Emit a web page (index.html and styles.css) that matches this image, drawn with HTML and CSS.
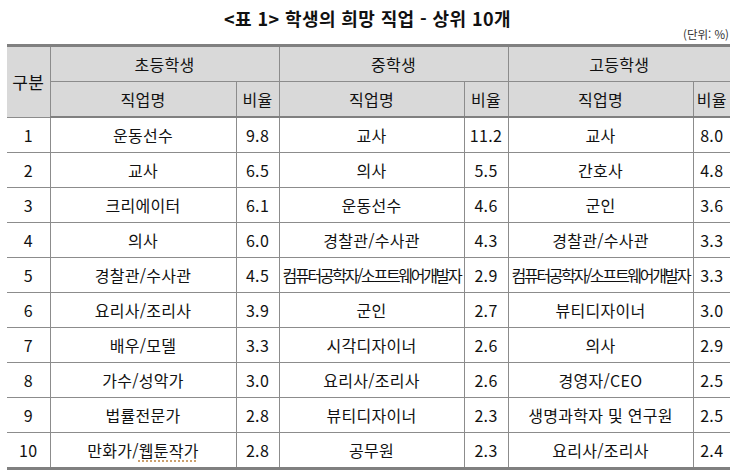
FILE: index.html
```html
<!DOCTYPE html>
<html lang="ko">
<head>
<meta charset="utf-8">
<link rel="stylesheet" href="styles.css">
</head>
<body>
<div class="page">
  <h1 class="title">&lt;표 1&gt; 학생의 희망 직업 - 상위 10개</h1>
  <div class="unit">(단위: %)</div>
  <table class="jobs">
    <colgroup>
      <col class="c-rank">
      <col class="c-name1"><col class="c-rate1">
      <col class="c-name2"><col class="c-rate2">
      <col class="c-name3"><col class="c-rate3">
    </colgroup>
    <thead>
      <tr class="h1">
        <th rowspan="2" class="gubun">구분</th>
        <th colspan="2">초등학생</th>
        <th colspan="2">중학생</th>
        <th colspan="2" class="last">고등학생</th>
      </tr>
      <tr class="h2">
        <th>직업명</th><th>비율</th>
        <th>직업명</th><th>비율</th>
        <th>직업명</th><th class="last">비율</th>
      </tr>
    </thead>
    <tbody>
      <tr><td>1</td><td>운동선수</td><td>9.8</td><td>교사</td><td>11.2</td><td>교사</td><td class="last">8.0</td></tr>
      <tr><td>2</td><td>교사</td><td>6.5</td><td>의사</td><td>5.5</td><td>간호사</td><td class="last">4.8</td></tr>
      <tr><td>3</td><td>크리에이터</td><td>6.1</td><td>운동선수</td><td>4.6</td><td>군인</td><td class="last">3.6</td></tr>
      <tr><td>4</td><td>의사</td><td>6.0</td><td>경찰관/수사관</td><td>4.3</td><td>경찰관/수사관</td><td class="last">3.3</td></tr>
      <tr><td>5</td><td>경찰관/수사관</td><td>4.5</td><td class="tight">컴퓨터공학자/소프트웨어개발자</td><td>2.9</td><td class="tight">컴퓨터공학자/소프트웨어개발자</td><td class="last">3.3</td></tr>
      <tr><td>6</td><td>요리사/조리사</td><td>3.9</td><td>군인</td><td>2.7</td><td>뷰티디자이너</td><td class="last">3.0</td></tr>
      <tr><td>7</td><td>배우/모델</td><td>3.3</td><td>시각디자이너</td><td>2.6</td><td>의사</td><td class="last">2.9</td></tr>
      <tr><td>8</td><td>가수/성악가</td><td>3.0</td><td>요리사/조리사</td><td>2.6</td><td>경영자/CEO</td><td class="last">2.5</td></tr>
      <tr><td>9</td><td>법률전문가</td><td>2.8</td><td>뷰티디자이너</td><td>2.3</td><td>생명과학자 및 연구원</td><td class="last">2.5</td></tr>
      <tr class="end"><td>10</td><td>만화가/<span class="spell">웹툰작가</span></td><td>2.8</td><td>공무원</td><td>2.3</td><td>요리사/조리사</td><td class="last">2.4</td></tr>
    </tbody>
  </table>
</div>
</body>
</html>
```
FILE: styles.css
```css
html, body {
  margin: 0;
  padding: 0;
  background: #ffffff;
}
.page {
  width: 735px;
  height: 474px;
  font-family: "Noto Sans CJK KR", "Noto Sans", sans-serif;
  color: #111111;
  overflow: hidden;
}
.title {
  margin: 0;
  padding-top: 6px;
  height: 24px;
  text-align: center;
  font-size: 18px;
  font-weight: 700;
  line-height: 24px;
  letter-spacing: 0.4px;
  color: #111;
}
.unit {
  text-align: right;
  font-size: 11.5px;
  line-height: 14px;
  height: 14px;
  margin-top: -3px;
  margin-bottom: 3px;
  padding-right: 6px;
  color: #333;
}
.jobs {
  margin-left: 7px;
  width: 723px;
  border-collapse: collapse;
  table-layout: fixed;
  font-size: 16px;
  letter-spacing: 0.3px;
}
.c-rank { width: 43px; }
.c-name1 { width: 186px; }
.c-rate1 { width: 43px; }
.c-name2 { width: 185px; }
.c-rate2 { width: 44px; }
.c-name3 { width: 185px; }
.c-rate3 { width: 37px; }
.jobs th,
.jobs td {
  padding: 0;
  text-align: center;
  vertical-align: middle;
  border-right: 1px solid #8c8c8c;
  border-bottom: 1px solid #8c8c8c;
  font-weight: 400;
  white-space: nowrap;
  overflow: hidden;
}
.jobs .last {
  border-right: none;
}
.jobs thead th {
  background: #d9d9d9;
  height: 34px;
}
.jobs tr.h1 th {
  border-top: 3px solid #808080;
}
.jobs tr.h2 th {
  border-bottom: 2px solid #808080;
}
.jobs .gubun {
  font-size: 17px;
}
.jobs td {
  height: 34px;
}
.jobs tr.end td {
  border-bottom: 3px solid #808080;
}
.jobs td.tight {
  letter-spacing: -2.3px;
}
.spell {
  text-decoration: underline dotted #c0894a;
  text-underline-offset: 4px;
}
```
